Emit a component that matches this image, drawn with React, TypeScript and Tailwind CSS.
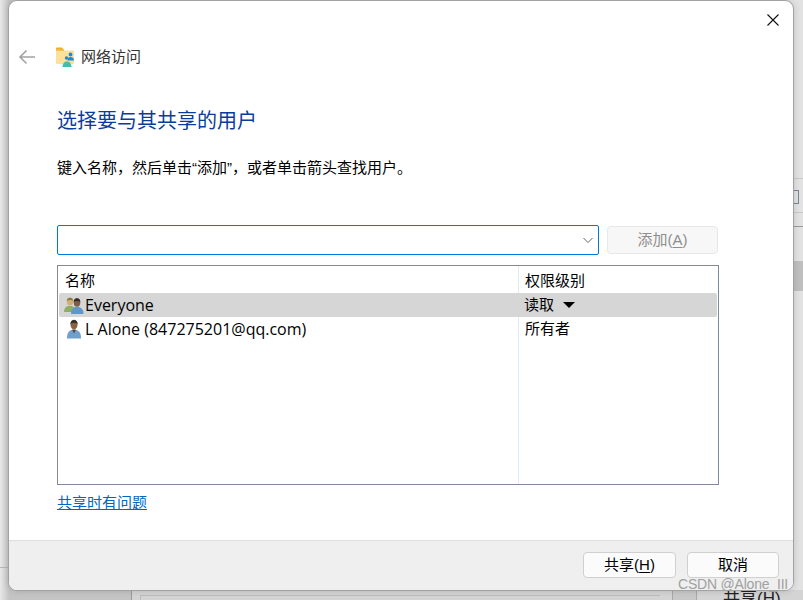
const ui = { fontFamily: '"Liberation Sans", "Noto Sans CJK SC", sans-serif' };
const latin = { fontFamily: '"Open Sans", "Liberation Sans", sans-serif' };

function FolderIcon() {
  return (
    <svg width="19" height="20" viewBox="0 0 19 20" className="shrink-0 block">
      <path d="M0 1.500C0 .8.5.5 1 .5h5l2 2.200H0z" fill="#f2b01e" />
      <path d="M0 3.500h17c.6 0 1 .4 1 1V16c0 .5-.4 1-1 1H1c-.6 0-1-.5-1-1z" fill="#fde09a" />
      <rect x="0" y="2.500" width="8" height="1.200" fill="#eeb12c" />
      <circle cx="14.500" cy="7.500" r="1.900" fill="#1c8ae0" />
      <path d="M11.500 13.500c0-2.500 1.200-3.500 3-3.500s3.500 1 3.500 3.500z" fill="#1c8ae0" />
      <circle cx="10.500" cy="11" r="1.700" fill="#2f86b8" />
      <path d="M6.500 20c0-3.500 2-5.500 4.500-5.500s4.500 2 4.500 5.500z" fill="#3fc0ae" />
    </svg>
  );
}

function GroupIcon() {
  return (
    <svg width="20" height="18" viewBox="0 0 20 18" className="shrink-0 block">
      <ellipse cx="6" cy="5.500" rx="3.200" ry="4" fill="#d3ad78" />
      <path d="M2.800 5c0-4.500 6.400-4.500 6.400 0-1.800-1.200-4.600-1.200-6.400 0z" fill="#8a7a48" />
      <path d="M0 16c0-3.500 1.500-5 4-6h4c2 1 3 2.500 3 6z" fill="#8fae62" />
      <ellipse cx="13" cy="6.500" rx="3.300" ry="4.200" fill="#7d5d43" />
      <path d="M9.700 6c0-5 6.600-5 6.600 0-1.800-1.300-4.800-1.300-6.600 0z" fill="#322c28" />
      <path d="M7 18c0-4 1.500-6 4-7h4c3 1 4.500 3 4.500 7z" fill="#5f97c8" />
    </svg>
  );
}

function UserIcon() {
  return (
    <svg width="16" height="20" viewBox="0 0 16 20" className="shrink-0 block">
      <ellipse cx="8" cy="5.500" rx="3.600" ry="4.800" fill="#8a6442" />
      <path d="M4.400 5C4.400-.5 11.600-.5 11.600 5c-1.800-1.400-5.400-1.400-7.200 0z" fill="#37302b" />
      <path d="M1 19.500c0-5 1.200-7 4.500-8.500h5c3.300 1.500 4.500 3.500 4.500 8.500z" fill="#6fa0cc" />
      <path d="M6 10.500h4L8 14.500z" fill="#5a4434" />
    </svg>
  );
}

export default function App() {
  return (
    <div className="w-[803px] h-[600px] overflow-hidden bg-[#e2e2e2] relative" style={ui}>
      {/* backdrop pieces peeking out around the dialog */}
      <div className="absolute left-0 top-0 bottom-0 w-[131px] bg-[linear-gradient(90deg,#e8e8e8_0px,#c4c4c4_9px)]" />
      <div className="absolute left-0 top-[567px] w-[9px] h-px bg-[#b4b4b4]" />
      <div className="absolute left-[131px] bottom-0 right-0 h-[10px] bg-[#d4d4d4] border-l border-[#9a9a9a]" />
      <div className="absolute left-[140px] bottom-0 w-[520px] h-[5px] border-l border-t border-[#bcbcbc]" />
      <div className="absolute left-[672px] bottom-0 w-[25px] h-[10px] border-x border-[#a8a8a8] bg-[#c8c8c8]" />
      <div className="absolute right-0 top-[178px] w-[9px] h-px bg-[#c8c8c8]" />
      <div className="absolute right-[4px] top-[190px] w-[5px] h-[14px] border border-l-0 border-[#7c8794]" />
      <div className="absolute right-0 top-[212px] w-[9px] h-px bg-[#c8c8c8]" />
      <div className="absolute right-0 top-[226px] w-[9px] h-px bg-[#9a9a9a]" />
      <div className="absolute right-0 top-[261px] w-[9px] h-[30px] bg-[#bfbfbf]" />
      <span className="absolute left-[723px] top-[589px] text-[17px] leading-[20px] text-[#222]">共享(H)</span>

      <div className="absolute left-[8px] top-0 w-[786px] h-[591px] bg-white rounded-[9px] border border-[#a2a2a2] overflow-hidden flex flex-col shadow-[0_0_6px_rgba(0,0,0,0.15)]">
        <div className="flex-1 flex flex-col relative pl-[48px] pr-[75px]">
          <button className="absolute right-[12px] top-[11px] text-black">
            <svg width="16" height="16" viewBox="0 0 16 16" className="block">
              <path d="M2.500 2.500l11 11M13.500 2.500l-11 11" stroke="#111" strokeWidth="1.100" fill="none" />
            </svg>
          </button>

          <div className="flex items-center h-[20px] mt-[46px] -ml-[48px]">
            <svg width="18" height="16" viewBox="0 0 18 16" className="ml-[9px] shrink-0">
              <path d="M17 8H2M8.500 1.500L2 8l6.500 6.500" stroke="#a3a3a3" strokeWidth="1.600" fill="none" />
            </svg>
            <span className="ml-[20px]"><FolderIcon /></span>
            <span className="ml-[6px] text-[15px] leading-[20px] text-[#333]">网络访问</span>
          </div>

          <h1 className="mt-[40px] text-[20px] leading-[28px] font-normal text-[#0b3c9c]">选择要与其共享的用户</h1>
          <p className="mt-[23px] text-[15px] leading-[20px] text-black">键入名称，然后单击“添加”，或者单击箭头查找用户。</p>

          <div className="mt-[47px] flex items-center gap-[8px]">
            <div className="flex-1 h-[30px] rounded-[2px] border border-[#0078d4] flex items-center justify-end pr-[4px]">
              <svg width="12" height="12" viewBox="0 0 12 12">
                <path d="M1.500 4l4.500 4.500L10.500 4" stroke="#666" strokeWidth="1" fill="none" />
              </svg>
            </div>
            <button className="w-[111px] h-[28px] rounded-[4px] border border-[#e8e8e8] bg-[#f7f7f7] text-[15px] text-[#8e8e8e]">
              添加(<span className="underline underline-offset-2">A</span>)
            </button>
          </div>

          <div className="mt-[10px] -mr-px h-[220px] border border-[#8a8a8a] border-r-[#7f8aa0] border-b-[#7f8aa0] bg-white flex flex-col relative text-[15px] text-black">
            <div className="absolute left-[460px] top-0 bottom-0 w-px bg-[#dfeaf5]" />
            <div className="flex h-[27px] items-center pt-[4px] relative">
              <span className="w-[460px] pl-[7px]">名称</span>
              <span className="pl-[7px]">权限级别</span>
            </div>
            <div className="flex h-[24px] items-center bg-[#d6d6d6] rounded-[2px] mx-px relative">
              <div className="w-[459px] flex items-center pl-[5px] gap-[1px]">
                <GroupIcon />
                <span className="text-[16px]" style={latin}>Everyone</span>
              </div>
              <div className="pl-[6px] flex items-center gap-[9px]">
                <span>读取</span>
                <span className="w-0 h-0 border-l-[6px] border-r-[6px] border-t-[6px] border-l-transparent border-r-transparent border-t-black" />
              </div>
            </div>
            <div className="flex h-[24px] items-center relative">
              <div className="w-[460px] flex items-center pl-[8px] gap-[3px]">
                <UserIcon />
                <span className="text-[16px]" style={latin}>L Alone (847275201@qq.com)</span>
              </div>
              <span className="pl-[7px]">所有者</span>
            </div>
          </div>

          <a className="mt-[8px] self-start text-[15px] leading-[20px] text-[#0067c0] underline">共享时有问题</a>
        </div>

        <div className="h-[50px] shrink-0 bg-[#efefef] border-t border-[#dedede] flex justify-end items-start pt-[11px] pr-[14px] gap-[11px]">
          <button className="w-[93px] h-[26px] rounded-[4px] border border-[#d0d0d0] bg-[#fbfbfb] text-[15px] text-black">
            共享(<span className="underline underline-offset-2">H</span>)
          </button>
          <button className="w-[92px] h-[26px] rounded-[4px] border border-[#d0d0d0] bg-[#fbfbfb] text-[15px] text-black">取消</button>
        </div>
      </div>

      <span className="absolute left-[678px] top-[575px] text-[14px] leading-[18px] text-[#a0a0a0] tracking-[-0.2px]">CSDN @Alone_III</span>
    </div>
  );
}
